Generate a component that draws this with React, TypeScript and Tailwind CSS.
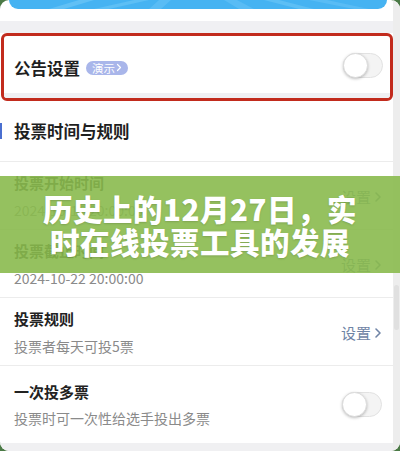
import React from "react";

const font = { fontFamily: '"Noto Sans CJK SC", "Noto Sans", sans-serif' };

function Toggle() {
  return (
    <div className="relative w-[40px] h-[25px] rounded-full bg-[#f4f4f4] border border-[#e2e2e2]">
      <div className="absolute left-[-1px] top-[-1px] w-[25px] h-[25px] rounded-full bg-white border border-[#dcdcdc] shadow-[0_1px_3px_rgba(0,0,0,0.25)]" />
    </div>
  );
}

function Chevron({ className }: { className?: string }) {
  return (
    <svg viewBox="0 0 8 12" className={className} fill="none" stroke="currentColor" strokeWidth="1.6" strokeLinecap="round" strokeLinejoin="round">
      <path d="M2 2 L6 6 L2 10" />
    </svg>
  );
}

function SetLink() {
  return (
    <div className="flex items-center gap-[3px] text-[15px] leading-[20px] text-[#6f84a6]">
      <span>设置</span>
      <Chevron className="w-[8px] h-[12px]" />
    </div>
  );
}

function Row({ title, sub, right }: { title: string; sub: string; right: React.ReactNode }) {
  return (
    <div className="h-[68px] flex items-center pl-[14px] pr-[11px] border-b border-[#ececec]">
      <div className="flex-1 flex flex-col gap-[6px]">
        <div className="text-[15px] leading-[22px] font-bold text-[#222]">{title}</div>
        <div className="text-[14px] leading-[20px] text-[#8a8a8a]">{sub}</div>
      </div>
      <div className="pt-[3px]">{right}</div>
    </div>
  );
}

export default function App() {
  return (
    <div className="w-[400px] h-[451px] bg-[#4b7a46] overflow-hidden relative" style={font}>
      <div className="w-full h-full rounded-[9px] bg-white overflow-hidden flex">
        <div className="w-[393px] flex flex-col">
          {/* banner */}
          <div className="h-[9px] mx-[9px] w-[378px] rounded-b-[10px] bg-[#46b3f2] overflow-hidden">
            <svg viewBox="0 0 378 9" className="w-full h-full" preserveAspectRatio="none">
              <polygon points="40,9 70,0 85,0 55,9" fill="#6cc6f7" opacity="0.7" />
              <polygon points="85,9 125,0 140,0 100,9" fill="#6cc6f7" opacity="0.6" />
              <polygon points="140,9 150,0 162,0 152,9" fill="#6cc6f7" opacity="0.5" />
              <polygon points="230,9 215,0 228,0 245,9" fill="#6cc6f7" opacity="0.5" />
              <polygon points="290,9 255,0 270,0 305,9" fill="#6cc6f7" opacity="0.6" />
              <polygon points="345,9 300,0 318,0 360,9" fill="#6cc6f7" opacity="0.5" />
            </svg>
          </div>
          <div className="h-[12px] bg-white" />
          <div className="h-[12px] bg-[#f0f0f3]" />

          {/* highlighted card */}
          <div className="ml-[1px] h-[68px] border-[3px] border-[#c22b1d] rounded-[6px] bg-white flex flex-col overflow-hidden">
            <div className="flex-1 flex items-center pl-[10px] pr-[7px] pt-[6px]">
              <div className="text-[16.5px] leading-[22px] font-bold text-[#1f1f1f]">公告设置</div>
              <div className="ml-[6px] h-[14px] px-[6px] rounded-full bg-[#a9b6ea] flex items-center gap-[1px] text-white text-[11.5px] leading-[14px]">
                <span>演示</span>
                <Chevron className="w-[6px] h-[9px]" />
              </div>
              <div className="flex-1" />
              <div className="mt-[-4px]">
                <Toggle />
              </div>
            </div>
            <div className="h-[5px] bg-[#f0f0f3]" />
          </div>

          {/* section header */}
          <div className="relative h-[61px] flex items-center pl-[14px] border-b border-[#ececec]">
            <div className="absolute left-0 top-[22px] w-[2px] h-[16px] bg-[#4a6fd0]" />
            <div className="text-[16.5px] leading-[22px] font-bold text-[#1f1f1f]">投票时间与规则</div>
          </div>

          <Row title="投票开始时间" sub="2024-10-16 20:00:00" right={<SetLink />} />
          <Row title="投票截止时间" sub="2024-10-22 20:00:00" right={<SetLink />} />
          <Row title="投票规则" sub="投票者每天可投5票" right={<SetLink />} />

          <div className="flex-1 flex items-start pl-[14px] pr-[11px] pt-[15px]">
            <div className="flex-1 flex flex-col gap-[5px]">
              <div className="text-[15px] leading-[22px] font-bold text-[#222]">一次投多票</div>
              <div className="text-[14px] leading-[20px] text-[#8a8a8a]">投票时可一次性给选手投出多票</div>
            </div>
            <div className="pt-[11px]">
              <Toggle />
            </div>
          </div>
          <div className="h-[8px] bg-[#f0f0f2]" />
        </div>
        {/* scrollbar */}
        <div className="w-[7px] bg-[#ededed] relative">
          <div className="absolute left-[1px] right-[1px] top-[285px] h-[45px] rounded-full bg-[#e0e0e0]" />
        </div>
      </div>

      {/* green overlay */}
      <div className="absolute left-0 right-0 top-[176px] h-[97px] bg-[rgba(138,186,78,0.9)] flex items-center justify-center">
        <div className="text-white text-[29.5px] leading-[33px] font-black text-center tracking-[0.5px] [text-shadow:0_1px_2px_rgba(0,0,0,0.15)]">
          历史上的12月27日，实
          <br />
          时在线投票工具的发展
        </div>
      </div>
    </div>
  );
}
